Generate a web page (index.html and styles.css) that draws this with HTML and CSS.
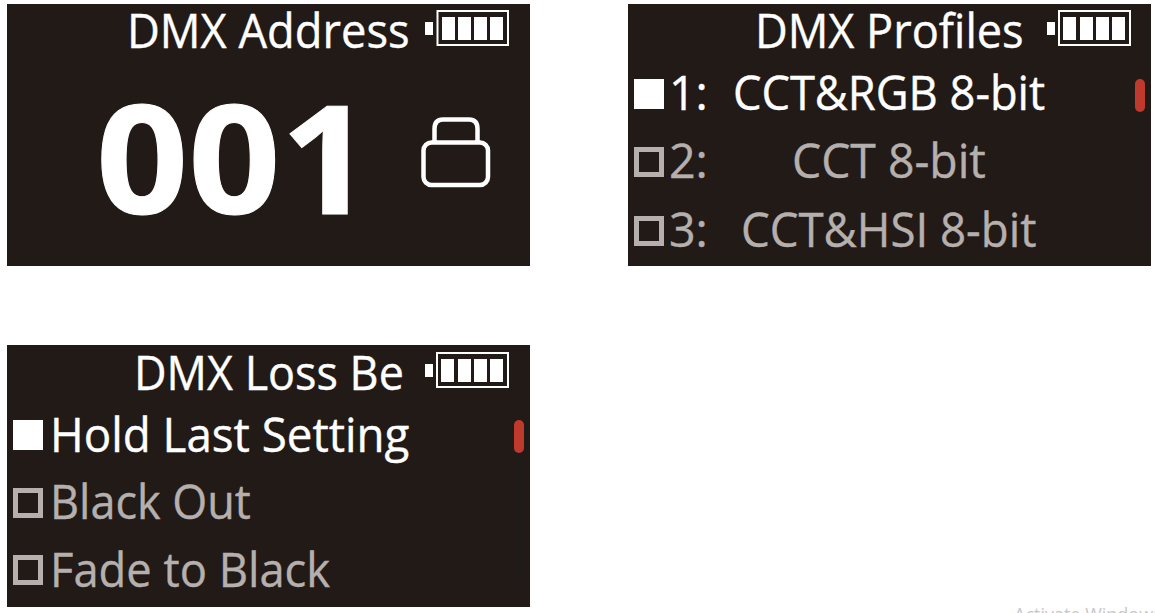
FILE: index.html
```html
<!DOCTYPE html>
<html lang="en">
<head>
    <meta charset="UTF-8">
    <meta name="viewport" content="width=device-width, initial-scale=1.0">
    <title>DMX Menu</title>
    <link rel="stylesheet" href="styles.css">
</head>
<body>
    <div class="screens">
        <div class="screen">
            <div class="header">
                <div class="title title-address"><span>DMX Address</span></div>
                <svg class="battery" width="84" height="36" viewBox="0 0 84 36">
                    <path fill="#fff" d="M0 12h8v13H0zM17 7h13v23H17zM33 7h13v23H33zM49 7h13v23H49zM65 7h13v23H65z"/>
                    <rect x="12.5" y="1" width="70.5" height="34" fill="none" stroke="#fff" stroke-width="2"/>
                </svg>
            </div>
            <div class="address">
                <div class="number"><span>001</span></div>
                <svg class="lock" width="70" height="71" viewBox="0 0 70 71" fill="none" stroke="#fff" stroke-width="4.5">
                    <path d="M13.5 25V12Q13.5 2.5 22 2.5H48Q56.5 2.5 56.5 12V25"/>
                    <rect x="2.5" y="25.5" width="64.5" height="42.5" rx="8"/>
                </svg>
            </div>
        </div>
        <div class="screen">
            <div class="header">
                <div class="title title-profiles"><span>DMX Profiles</span></div>
                <svg class="battery" width="84" height="36" viewBox="0 0 84 36">
                    <path fill="#fff" d="M0 12h8v13H0zM16 7h13v23H16zM33 7h13v23H33zM49 7h13v23H49zM65 7h13v23H65z"/>
                    <rect x="12" y="1" width="71" height="34" fill="none" stroke="#fff" stroke-width="2"/>
                </svg>
            </div>
            <div class="list profiles">
                <div class="row active">
                    <i class="box"></i>
                    <div class="num"><span>1:</span></div>
                    <div class="name rgb"><span>CCT&amp;RGB 8-bit</span></div>
                </div>
                <div class="row">
                    <i class="box"></i>
                    <div class="num"><span>2:</span></div>
                    <div class="name cct"><span>CCT 8-bit</span></div>
                </div>
                <div class="row">
                    <i class="box"></i>
                    <div class="num"><span>3:</span></div>
                    <div class="name hsi"><span>CCT&amp;HSI 8-bit</span></div>
                </div>
            </div>
            <div class="scroll"><div class="thumb"></div></div>
        </div>
        <div class="screen loss-screen">
            <div class="header">
                <div class="title title-loss"><span>DMX Loss Be</span></div>
                <svg class="battery" width="84" height="36" viewBox="0 0 84 36">
                    <path fill="#fff" d="M0 12h8v13H0zM16 7h13v23H16zM33 7h13v23H33zM49 7h13v23H49zM65 7h13v23H65z"/>
                    <rect x="12" y="1" width="71" height="34" fill="none" stroke="#fff" stroke-width="2"/>
                </svg>
            </div>
            <div class="list loss">
                <div class="row active">
                    <i class="box"></i>
                    <div class="option hold"><span>Hold Last Setting</span></div>
                </div>
                <div class="row">
                    <i class="box"></i>
                    <div class="option black"><span>Black Out</span></div>
                </div>
                <div class="row">
                    <i class="box"></i>
                    <div class="option fade"><span>Fade to Black</span></div>
                </div>
            </div>
            <div class="scroll"><div class="thumb"></div></div>
        </div>
    </div>
    <div class="watermark">Activate Windows</div>
</body>
</html>
```
FILE: styles.css
```css
body {
    margin: 0;
    height: 613px;
    position: relative;
    overflow: hidden;
    background: #fff;
    font-family: "Open Sans", "Noto Sans", sans-serif;
}
.screens {
    display: grid;
    grid-template-columns: 523px 523px;
    grid-template-rows: 262px 262px;
    column-gap: 98px;
    row-gap: 79px;
    padding: 4px 0 0 7px;
}
.screen {
    position: relative;
    background: #221a17;
    color: #fff;
    font-size: 48px;
    white-space: nowrap;
}
.screen span {
    display: inline-block;
    transform-origin: 0 50%;
    -webkit-text-stroke: 0.4px currentColor;
}
.header {
    display: flex;
    height: 52px;
}
.title {
    box-sizing: border-box;
    width: 418px;
    line-height: 52px;
}
.title-address {
    padding-left: 119.5px;
}
.title-address span {
    transform: scaleX(0.943);
}
.title-profiles {
    width: 419px;
    padding-left: 126.5px;
}
.title-profiles span {
    transform: scaleX(0.94);
}
.title-loss {
    padding-left: 126.5px;
}
.title-loss span {
    transform: scaleX(0.936);
}
.battery {
    margin-top: 6px;
    flex: none;
}
.loss-screen .header {
    box-sizing: border-box;
    height: 53px;
    padding-top: 1px;
}
.address {
    display: flex;
    height: 210px;
}
.number {
    width: 414px;
    box-sizing: border-box;
    padding-left: 89px;
    font-size: 151px;
    font-weight: 700;
    line-height: 199px;
}
.number span {
    transform: scaleX(1.068);
    -webkit-text-stroke: 1px currentColor;
}
.lock {
    margin-top: 61px;
    flex: none;
}
.row {
    display: flex;
    align-items: center;
    height: 68.5px;
    padding-left: 6px;
    line-height: 68.5px;
    color: #b5b0ae;
}
.row span {
    padding-top: 3px;
}
.loss .row {
    height: 67.5px;
    line-height: 67.5px;
}
.box {
    box-sizing: border-box;
    width: 30px;
    height: 30px;
    margin-top: 7px;
    border: 5px solid #b5b0ae;
}
.active {
    color: #fff;
}
.active .box {
    background: #fff;
    border-color: #fff;
}
.num {
    width: 50px;
    padding-left: 5px;
}
.num span {
    transform: scaleX(0.97);
}
.rgb {
    padding-left: 13.5px;
}
.rgb span {
    transform: scaleX(0.942);
}
.cct {
    padding-left: 72.5px;
}
.cct span {
    transform: scaleX(0.965);
}
.hsi {
    padding-left: 22px;
}
.hsi span {
    transform: scaleX(0.95);
}
.option {
    padding-left: 6.5px;
}
.hold span {
    transform: scaleX(0.952);
}
.black span {
    transform: scaleX(0.937);
}
.fade span {
    transform: scaleX(0.944);
}
.scroll {
    position: absolute;
    top: 75px;
    right: 6.5px;
    width: 10px;
    height: 165px;
    background: linear-gradient(#1f1b18, #1f1b18) center / 5px 100% no-repeat;
}
.thumb {
    height: 33px;
    border-radius: 5px;
    background: #c0392d;
}
.watermark {
    position: absolute;
    left: 1014px;
    top: 602px;
    font-size: 18px;
    line-height: 24px;
    color: #c8c8c8;
    white-space: nowrap;
}
```
